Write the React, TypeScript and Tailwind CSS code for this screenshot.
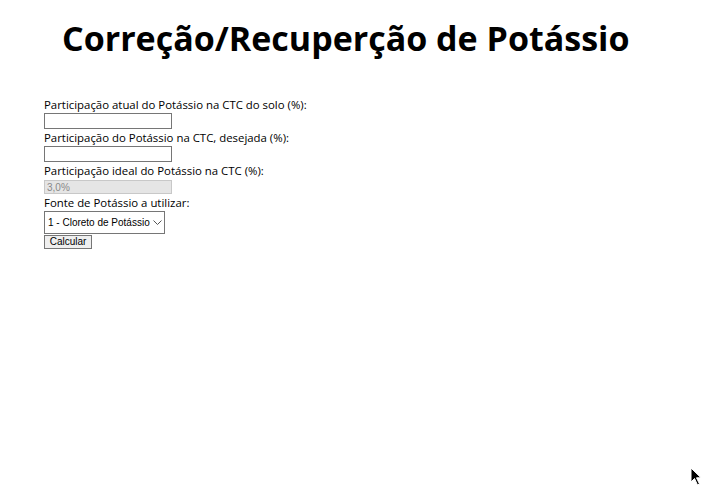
import React from 'react';

function Cursor() {
  return (
    <svg className="absolute left-[690px] top-[467px]" width="12" height="19" viewBox="0 0 12 19">
      <path d="M1 1 L1 15 L4.5 11.5 L7.5 18 L9.5 17 L6.5 10.8 L11 10.8 Z" fill="#000" stroke="#fff" strokeWidth="1" />
    </svg>
  );
}

export default function App() {
  return (
    <div className="relative w-[724px] h-[487px] bg-white overflow-hidden font-['Open_Sans',sans-serif] text-black">
      <h1 className="pl-[62px] pt-[15px] text-[34px] leading-[46px] font-bold">
        Correção/Recuperção de Potássio
      </h1>
      <form className="pl-[44px] pt-[35px] text-[11.4px] leading-[17px]">
        <label className="block">Participação atual do Potássio na CTC do solo (%):</label>
        <input type="text" className="block w-[128px] h-[16px] border border-[#767676] px-[2px]" />
        <label className="block">Participação do Potássio na CTC, desejada (%):</label>
        <input type="text" className="block w-[128px] h-[16px] border border-[#767676] px-[2px]" />
        <label className="block">Participação ideal do Potássio na CTC (%):</label>
        <input
          type="text"
          disabled
          value="3,0%"
          className="block mt-[1px] w-[128px] h-[14px] border border-[#c8c8c8] bg-[#e5e5e5] px-[2px] text-[10px] text-[#888] font-['Liberation_Sans',sans-serif]"
        />
        <label className="block">Fonte de Potássio a utilizar:</label>
        <div className="flex items-center w-[121px] h-[23px] border border-[#767676] pl-[3px] pr-[2px] text-[10px] font-['Liberation_Sans',sans-serif]">
          <span className="flex-1 whitespace-nowrap">1 - Cloreto de Potássio</span>
          <svg width="9" height="6" viewBox="0 0 9 6">
            <path d="M0.5 0.5 L4.5 4.5 L8.5 0.5" fill="none" stroke="#555" strokeWidth="1" />
          </svg>
        </div>
        <button
          type="button"
          className="block mt-[1px] w-[48px] h-[14px] border border-[#767676] bg-[#efefef] text-[10px] leading-[12px] font-['Liberation_Sans',sans-serif]"
        >
          Calcular
        </button>
      </form>
      <Cursor />
    </div>
  );
}
